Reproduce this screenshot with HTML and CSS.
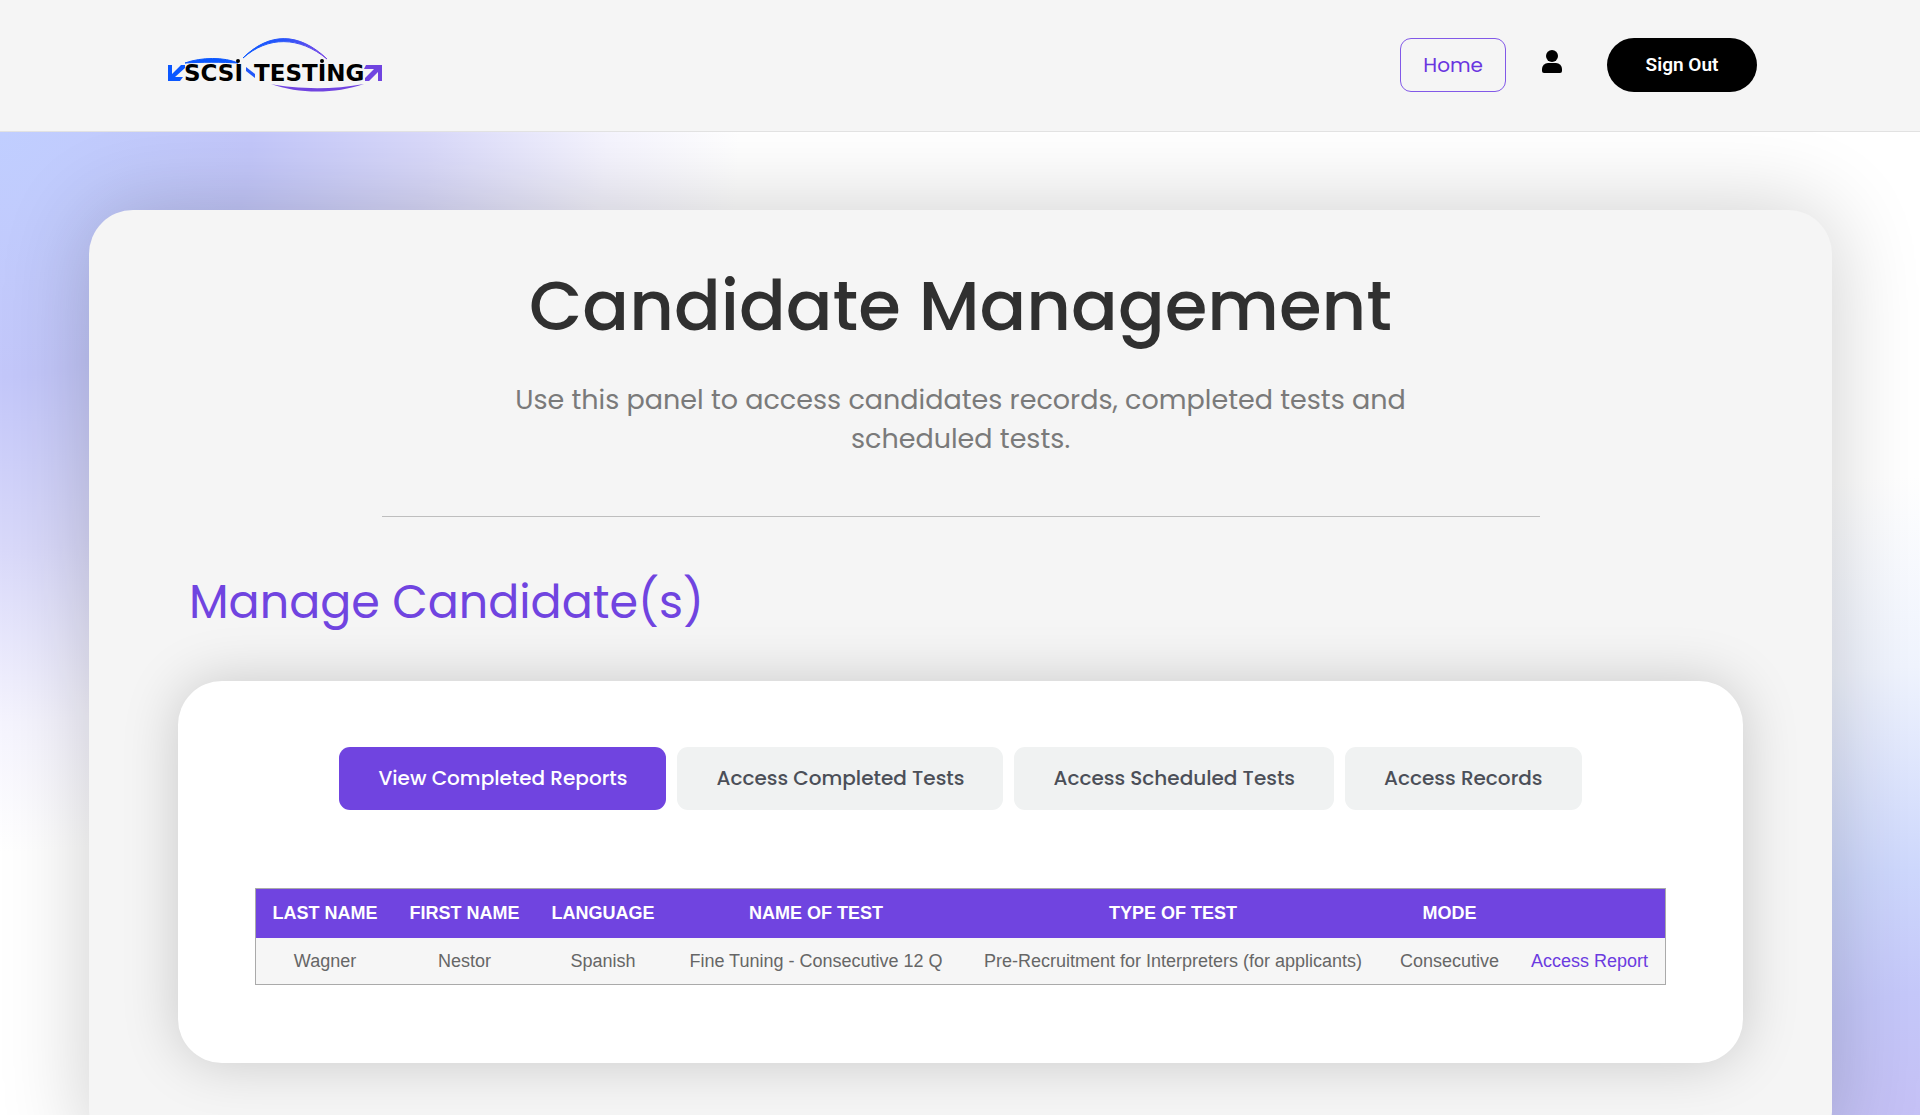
FILE: index.html
```html
<!DOCTYPE html>
<html lang="en">
<head>
  <meta charset="utf-8">
  <meta name="viewport" content="width=device-width, initial-scale=1">
  <title>Candidate Management</title>
  <link rel="stylesheet" href="styles.css">
</head>
<body>
  <header class="site-header">
    <a class="logo" href="#" aria-label="SCSI Testing">
      <svg width="216" height="58" viewBox="0 0 216 58">
        <defs>
          <linearGradient id="arc" x1="0" x2="1">
            <stop offset="0" stop-color="#0b57ff"/>
            <stop offset="0.5" stop-color="#2a55fa"/>
            <stop offset="1" stop-color="#7a45e6"/>
          </linearGradient>
        </defs>
        <path d="M76 22C102 -4 132 -4 160 23C132 0 101 0 76 22Z" fill="url(#arc)" stroke="url(#arc)" stroke-width="1"/>
        <path d="M18 27C34 21 58 21 71 27C56 26 34 26 18 27Z" fill="#0b57ff" stroke="#0b57ff" stroke-width="1"/>
        <path d="M1 29h4v9l9-9h4v3l-10 9h8l-3 4H1Z" fill="#0b57ff"/>
        <path d="M79 31l9 7v4l-9-7Z" fill="#2257fa"/>
        <path d="M199 29h16v16h-4v-9l-9 9h-4v-3l9-9h-10Z" fill="#7044e0"/>
        <path d="M104 48C128 53 166 54 197 48C168 58 132 58 104 48Z" fill="#7044e0"/>
        <text class="logo-text" x="17" y="45">SCSI</text>
        <text class="logo-text" x="87" y="45">TESTING</text>
        <circle cx="71" cy="25" r="2"/>
        <circle cx="155" cy="25" r="2"/>
      </svg>
    </a>
    <nav class="nav">
      <a class="home-link" href="#">Home</a>
      <a class="account" href="#" aria-label="Account">
        <svg width="20" height="24" viewBox="0 0 20 24"><circle cx="10" cy="6" r="6"/><path d="M6 13h8a6 6 0 0 1 6 6v2a2 2 0 0 1-2 2H2a2 2 0 0 1-2-2v-2a6 6 0 0 1 6-6Z"/></svg>
      </a>
      <button class="sign-out" type="button">Sign Out</button>
    </nav>
  </header>

  <main class="page">
    <section class="panel">
      <h1 class="title">Candidate Management</h1>
      <p class="intro">Use this panel to access candidates records, completed tests and scheduled tests.</p>
      <hr class="rule">
      <h2 class="subtitle">Manage Candidate(s)</h2>
      <div class="card">
        <div class="tabs" role="tablist">
          <button class="tab tab-active" type="button" role="tab" aria-selected="true">View Completed Reports</button>
          <button class="tab" type="button" role="tab" aria-selected="false">Access Completed Tests</button>
          <button class="tab" type="button" role="tab" aria-selected="false">Access Scheduled Tests</button>
          <button class="tab" type="button" role="tab" aria-selected="false">Access Records</button>
        </div>
        <table class="reports">
          <colgroup>
            <col class="col-last"><col class="col-first"><col class="col-language"><col class="col-name"><col class="col-type"><col class="col-mode"><col>
          </colgroup>
          <thead>
            <tr><th>LAST NAME</th><th>FIRST NAME</th><th>LANGUAGE</th><th>NAME OF TEST</th><th>TYPE OF TEST</th><th>MODE</th><td></td></tr>
          </thead>
          <tbody>
            <tr><td>Wagner</td><td>Nestor</td><td>Spanish</td><td>Fine Tuning - Consecutive 12 Q</td><td>Pre-Recruitment for Interpreters (for applicants)</td><td>Consecutive</td><td><a class="report-link" href="#">Access Report</a></td></tr>
          </tbody>
        </table>
      </div>
    </section>
  </main>
</body>
</html>
```
FILE: styles.css
```css
* {
  box-sizing: border-box;
}

body {
  margin: 0;
  font-family: Poppins, Inter, sans-serif;
  background: #fff;
}

.site-header {
  display: flex;
  align-items: center;
  justify-content: space-between;
  height: 132px;
  padding: 0 163px 2px 167px;
  background: #f5f5f5;
  border-bottom: 1px solid #e2e2e2;
}

.logo svg {
  display: block;
}

.logo-text {
  font-family: "DejaVu Sans", sans-serif;
  font-size: 23px;
  font-weight: 700;
}

.nav {
  display: flex;
  align-items: center;
}

.home-link {
  padding: 0 22px;
  font-size: 20px;
  line-height: 52px;
  color: #6a35e0;
  text-decoration: none;
  border: 1px solid #8259e8;
  border-radius: 11px;
}

.account {
  margin: 0 45px 6px 36px;
}

.account svg {
  display: block;
}

.sign-out {
  width: 150px;
  height: 54px;
  padding: 0;
  font: 600 19px Roboto, sans-serif;
  color: #fff;
  background: #000;
  border: 0;
  border-radius: 27px;
}

.page {
  padding: 78px 88px 88px 89px;
  overflow: hidden;
  background:
    radial-gradient(740px 720px at 0 0, #c0ceff 0, #c3c7fa 34%, #d9d9fa 58%, #f5f4fe 82%, rgba(255, 255, 255, 0) 100%),
    radial-gradient(680px 680px at 100% 1024px, #c5bef4 0, #c5c8fa 24%, #ced8fd 42%, #f0f4fe 72%, rgba(255, 255, 255, 0) 100%),
    #fff;
}

.panel {
  padding: 54px 89px 93px;
  background: #f5f5f5;
  border-radius: 44px;
  box-shadow: 0 0 90px rgba(0, 0, 0, 0.2);
}

.title {
  margin: 0;
  font-size: 69px;
  font-weight: 500;
  line-height: 84px;
  text-align: center;
  color: #303030;
}

.intro {
  max-width: 920px;
  margin: 32px auto 58px;
  font-size: 27px;
  line-height: 39px;
  text-align: center;
  color: #7a7a7a;
}

.rule {
  max-width: 1158px;
  margin: 0 auto;
  border: 0;
  border-top: 1px solid #bebebe;
}

.subtitle {
  margin: 57px 0 51px;
  padding-left: 11px;
  font-size: 46px;
  font-weight: 400;
  line-height: 56px;
  color: #7044e0;
}

.card {
  padding: 66px 77px 78px;
  background: #fff;
  border-radius: 44px;
  box-shadow: 0 0 56px rgba(0, 0, 0, 0.18);
}

.tabs {
  display: flex;
  flex-wrap: wrap;
  justify-content: center;
  gap: 11px;
  margin-bottom: 78px;
}

.tab {
  padding: 0 39px;
  font: 500 20px/63px Poppins, Inter, sans-serif;
  color: #4b4f58;
  background: #f0f2f2;
  border: 0;
  border-radius: 11px;
}

.tab-active {
  color: #fff;
  background: #7044e0;
}

.reports {
  width: 100%;
  table-layout: fixed;
  border: 1px solid #aaa;
  border-spacing: 0;
  font-family: "Liberation Sans", Arial, sans-serif;
  font-size: 18px;
  line-height: 20px;
  text-align: center;
  color: #666;
}

.col-last { width: 138px; }
.col-first { width: 141px; }
.col-language { width: 136px; }
.col-name { width: 290px; }
.col-type { width: 424px; }
.col-mode { width: 129px; }

.reports th,
.reports td {
  padding: 13px 0;
  white-space: nowrap;
}

.reports thead {
  color: #fff;
  background: #7044e0;
}

.reports th {
  padding: 14px 0 15px;
}

.reports tbody {
  background: #f6f6f6;
}

.report-link {
  color: #6b3be0;
  text-decoration: none;
}
```
